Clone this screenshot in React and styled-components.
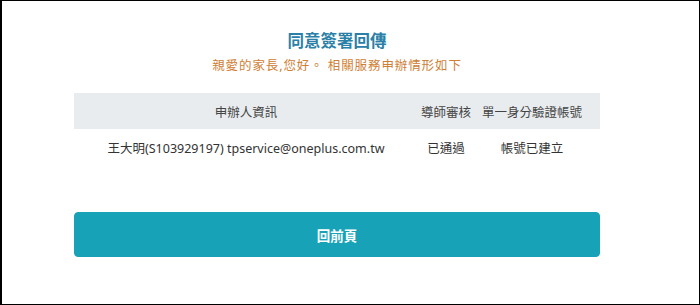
import styled, { createGlobalStyle } from "styled-components";

const GlobalStyle = createGlobalStyle`
    html, body {
        margin: 0;
        padding: 0;
        background: #fff;
    }
    body {
        font-family: "Noto Sans", "Noto Sans CJK TC", sans-serif;
    }
`

const StyledFrame = styled.div`
    box-sizing: border-box;
    width: 700px;
    height: 305px;
    border: 1px solid #000;
    border-left-width: 2px;
    padding: 28px 0 0 72px;
`
const StyledContent = styled.div`
    width: 526px;
    display: flex;
    flex-direction: column;
    align-items: stretch;
`
const StyledTitle = styled.h3`
    margin: 0;
    text-align: center;
    font-size: 16.5px;
    line-height: 24px;
    font-weight: 700;
    color: #2b80a8;
`
const StyledSubtitle = styled.p`
    margin: 3px 0 0;
    text-align: center;
    font-size: 12.5px;
    line-height: 20px;
    color: #cf8035;
    letter-spacing: 0.9px;
`
const StyledTable = styled.div`
    margin-top: 17px;
    display: grid;
    grid-template-columns: 344px 56px 1fr;
`
const StyledCell = styled.div`
    height: 36px;
    display: flex;
    align-items: center;
    justify-content: center;
    font-size: 12.5px;
    white-space: nowrap;
    color: ${props => props.$head ? "#444" : "#333"};
    background: ${props => props.$head ? "#e9ecef" : "transparent"};
    padding-right: ${props => props.$last ? "10px" : "0"};
`
const StyledButton = styled.button`
    margin-top: 47px;
    height: 45px;
    border: 1px solid #17a2b8;
    border-radius: 4px;
    background: #17a2b8;
    color: #fff;
    font-family: "Noto Sans CJK TC", sans-serif;
    font-size: 13.5px;
    font-weight: 700;
    cursor: pointer;
`

const header = ["申辦人資訊", "導師審核", "單一身分驗證帳號"];
const row = ["王大明(S103929197) tpservice@oneplus.com.tw", "已通過", "帳號已建立"];

function App() {
    return (
        <>
            <GlobalStyle />
            <StyledFrame>
                <StyledContent>
                    <StyledTitle>同意簽署回傳</StyledTitle>
                    <StyledSubtitle>親愛的家長,您好。 相關服務申辦情形如下</StyledSubtitle>
                    <StyledTable>
                        {header.map((text, i) => (
                            <StyledCell key={"h" + i} $head $last={i === 2}>{text}</StyledCell>
                        ))}
                        {row.map((text, i) => (
                            <StyledCell key={"r" + i} $last={i === 2}>{text}</StyledCell>
                        ))}
                    </StyledTable>
                    <StyledButton>回前頁</StyledButton>
                </StyledContent>
            </StyledFrame>
        </>
    )
}

export default App;
